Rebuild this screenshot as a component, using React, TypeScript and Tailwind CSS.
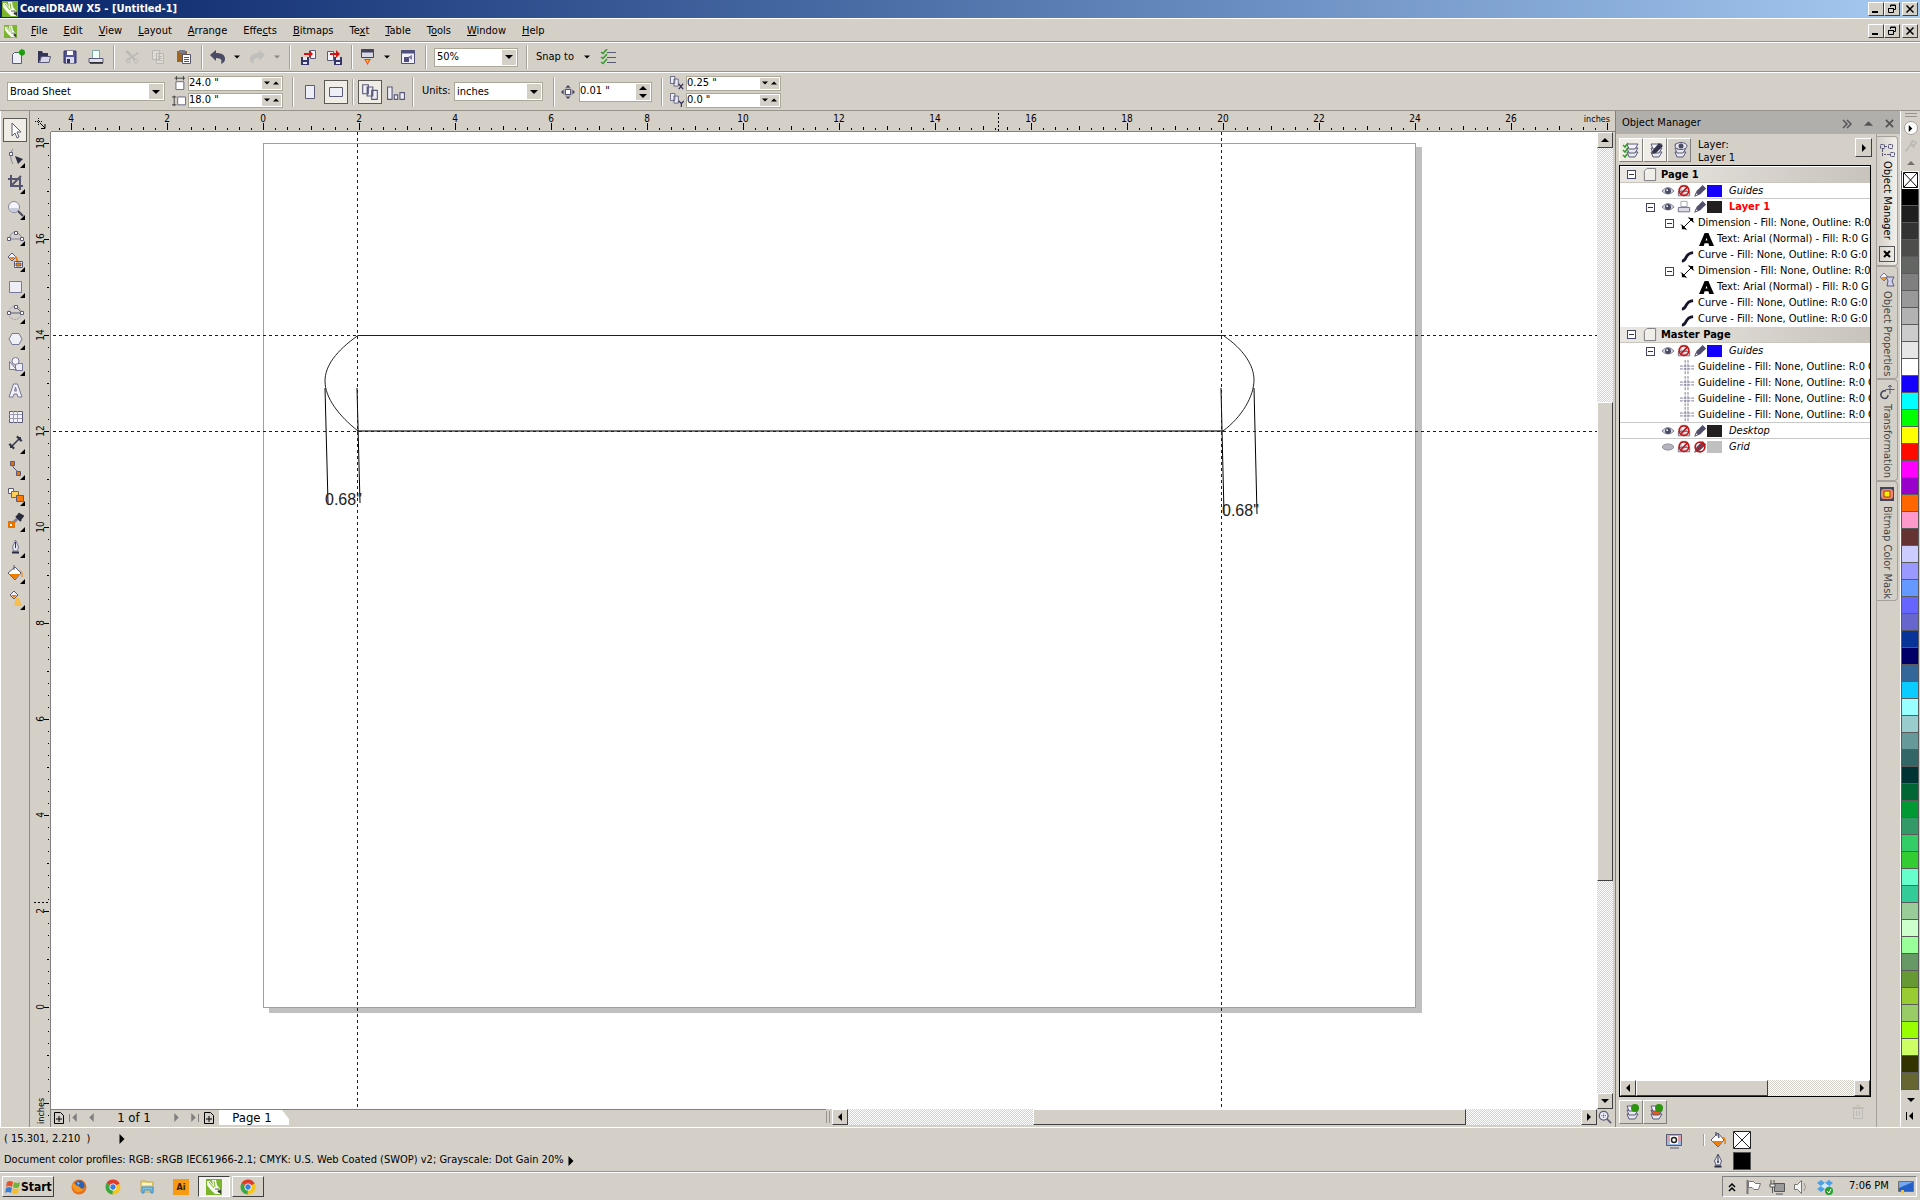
import React, { useState } from 'react';

const menus = [
  ['', 'F', 'ile'],
  ['', 'E', 'dit'],
  ['', 'V', 'iew'],
  ['', 'L', 'ayout'],
  ['', 'A', 'rrange'],
  ['Effe', 'c', 'ts'],
  ['', 'B', 'itmaps'],
  ['Te', 'x', 't'],
  ['', 'T', 'able'],
  ['T', 'o', 'ols'],
  ['', 'W', 'indow'],
  ['', 'H', 'elp'],
];

const palette = [
  '#000000', '#1f1f1f', '#333333', '#4d4d4b', '#646664', '#7f7f7f', '#999999', '#b2b2b2', '#cccccc', '#e6e6e6', '#ffffff',
  '#1400ff', '#00ffff', '#00ff00', '#ffff00', '#ff0a00', '#ff00ff', '#9900cc', '#ff6600', '#ff99cc', '#663333',
  '#ccccff', '#9999ff', '#6699ff', '#6666ff', '#6666cc', '#083399', '#000066', '#336699', '#0accff', '#99ffff',
  '#99cccc', '#669999', '#336666', '#003333', '#006633', '#009933', '#339966', '#33cc66', '#33cc33', '#66ffcc',
  '#33cc99', '#99cc99', '#ccffcc', '#99ff99', '#669966', '#669933', '#99cc33', '#99cc66', '#99ff00', '#ccff66',
  '#333300', '#666633',
];

type TreeRow = {
  kind: 'page' | 'layer' | 'dimension' | 'text' | 'curve' | 'guideline';
  label: string;
  open?: boolean;
  color?: string;
  active?: boolean;
  hidden?: boolean;
  locked?: boolean;
  line?: boolean;
};

const treeRows: TreeRow[] = [
  { kind: 'page', label: 'Page 1' },
  { kind: 'layer', label: 'Guides', color: '#1400ff', line: true },
  { kind: 'layer', label: 'Layer 1', color: '#231f20', open: true, active: true },
  { kind: 'dimension', label: 'Dimension - Fill: None, Outline: R:0 G' },
  { kind: 'text', label: 'Text: Arial (Normal) - Fill: R:0 G:' },
  { kind: 'curve', label: 'Curve - Fill: None, Outline: R:0 G:0' },
  { kind: 'dimension', label: 'Dimension - Fill: None, Outline: R:0 G' },
  { kind: 'text', label: 'Text: Arial (Normal) - Fill: R:0 G:' },
  { kind: 'curve', label: 'Curve - Fill: None, Outline: R:0 G:0' },
  { kind: 'curve', label: 'Curve - Fill: None, Outline: R:0 G:0' },
  { kind: 'page', label: 'Master Page' },
  { kind: 'layer', label: 'Guides', color: '#1400ff', open: true },
  { kind: 'guideline', label: 'Guideline - Fill: None, Outline: R:0 G' },
  { kind: 'guideline', label: 'Guideline - Fill: None, Outline: R:0 G' },
  { kind: 'guideline', label: 'Guideline - Fill: None, Outline: R:0 G' },
  { kind: 'guideline', label: 'Guideline - Fill: None, Outline: R:0 G', line: true },
  { kind: 'layer', label: 'Desktop', color: '#231f20', line: true },
  { kind: 'layer', label: 'Grid', color: '#c0c0c0', hidden: true, locked: true },
];

// Canvas scale: 48px per inch, origin measured from the canvas' top left
const INCH = 48;
const ORIGIN_X = 212;
const ORIGIN_Y = 875;

const raised = 'border border-t-white border-l-white border-r-[#404040] border-b-[#404040] bg-[#d4d0c8]';
const track = 'bg-[repeating-conic-gradient(#ffffff_0_25%,#d4d0c8_0_50%)] bg-[length:2px_2px]';
const INK = '#5a5a78';

function Icon({ children, size = 16, box = 16 }: { children: React.ReactNode; size?: number; box?: number }) {
  return (
    <svg width={size} height={size} viewBox={`0 0 ${box} ${box}`} fill="none" className="shrink-0" aria-hidden="true">
      {children}
    </svg>
  );
}

function Arrow({ dir, size = 8, color = '#000' }: { dir: 'up' | 'down' | 'left' | 'right'; size?: number; color?: string }) {
  const points = {
    up: '0,6 8,6 4,2',
    down: '0,2 8,2 4,6',
    left: '6,0 6,8 2,4',
    right: '2,0 2,8 6,4',
  };
  return (
    <svg width={size} height={size} viewBox="0 0 8 8" className="shrink-0" aria-hidden="true">
      <polygon points={points[dir]} fill={color} />
    </svg>
  );
}

function CorelLogo({ size = 16 }: { size?: number }) {
  return (
    <Icon size={size}>
      <rect width="16" height="16" fill="#7ab52c" />
      <path d="M1 2l3 0 3 4-1-5h4l1 5 3 4v5h-5L4 10 1 6z" fill="#f6f9f0" />
      <path d="M3 3l5 6M8 2l1 6" stroke="#7ab52c" />
      <path d="M9 10h4v4" stroke="#5d6b4a" />
      <path d="M11 12l4 3v-4z" fill="#333" />
    </Icon>
  );
}

function Bucket({ size = 18 }: { size?: number }) {
  return (
    <Icon size={size} box={18}>
      <path d="M2 9l7-7 6 7-6 7z" fill="#fff" stroke={INK} />
      <path d="M3 10h11l-5 5.500z" fill="#ee7d00" />
      <path d="M7 1v4M9 3l1 4" stroke={INK} strokeWidth="1.500" />
      <path d="M13 7c4-1 3 3 3 6" stroke="#ee7d00" strokeWidth="1.500" />
    </Icon>
  );
}

function Pen() {
  return (
    <Icon>
      <path d="M8 1l3.500 7-1.500 4H6L4.500 8z" fill="#e8e8f2" stroke={INK} />
      <path d="M8 2v7" stroke="#333348" />
      <circle cx="8" cy="9" r="1" fill="#333348" />
      <path d="M4.500 13.500h7" stroke="#2a2a40" strokeWidth="2" />
    </Icon>
  );
}

function Chrome() {
  return (
    <Icon>
      <circle cx="8" cy="8" r="7.500" fill="#f5c518" />
      <path d="M8 8L1.500 4.300A7.500 7.500 0 0 1 14.600 4.500z" fill="#e03b2c" />
      <path d="M8 8L1.500 4.300A7.500 7.500 0 0 0 7.500 15.500z" fill="#3aa648" />
      <circle cx="8" cy="8" r="3.500" fill="#fff" />
      <circle cx="8" cy="8" r="2.700" fill="#3b7ddd" />
    </Icon>
  );
}

/* ---------- Toolbar bits ---------- */

function Sep({ className = 'mx-1 h-6' }: { className?: string }) {
  return <div className={`w-0.5 shrink-0 border-l border-r border-l-[#a5a19a] border-r-white ${className}`} />;
}

function Tool({ label, width = 'w-[26px]', children }: { label: string; width?: string; children: React.ReactNode }) {
  return (
    <button type="button" aria-label={label} title={label} className={`flex h-6 shrink-0 items-center justify-center ${width}`}>
      {children}
    </button>
  );
}

function Combo({ label, options, className }: { label: string; options: string[]; className: string }) {
  return (
    <div className={`relative h-[19px] shrink-0 ${className}`}>
      <select aria-label={label} className="h-full w-full appearance-none border border-[#aca899] bg-white pr-4 pl-0.5 text-[11px] leading-4">
        {options.map((o) => (
          <option key={o}>{o}</option>
        ))}
      </select>
      <span className="pointer-events-none absolute top-0.5 right-0.5 bottom-0.5 flex w-3.5 items-center justify-center bg-[#d4d0c8]">
        <Arrow dir="down" />
      </span>
    </div>
  );
}

function SpinField({ label, value }: { label: string; value: string }) {
  return (
    <div className="flex h-[15px] w-[95px] items-center border border-[#aca899] bg-white">
      <input aria-label={label} defaultValue={value} className="w-[73px] min-w-0 bg-white text-[11px] leading-3 outline-none" />
      <div className="flex h-[11px] w-[19px] items-center justify-around bg-[#d4d0c8]">
        <button type="button" aria-label={`${label} down`}><Arrow dir="down" size={6} /></button>
        <button type="button" aria-label={`${label} up`}><Arrow dir="up" size={6} /></button>
      </div>
    </div>
  );
}

function WindowButtons() {
  return (
    <div className="flex pr-0.5">
      <button type="button" aria-label="Minimize" className={`flex h-3.5 w-4 items-center justify-center ${raised}`}>
        <Icon size={10} box={10}><path d="M1 8h6" stroke="#000" strokeWidth="2" /></Icon>
      </button>
      <button type="button" aria-label="Restore" className={`flex h-3.5 w-4 items-center justify-center ${raised}`}>
        <Icon size={10} box={10}><path d="M3.500 3V1h5v4.500H7M3 1.500h6M1.500 4.500h5v4h-5zM1 4.500h6" stroke="#000" /></Icon>
      </button>
      <button type="button" aria-label="Close" className={`ml-0.5 flex h-3.5 w-4 items-center justify-center ${raised}`}>
        <Icon size={10} box={10}><path d="M1.500 1.500l7 7M8.500 1.500l-7 7" stroke="#000" strokeWidth="1.500" /></Icon>
      </button>
    </div>
  );
}

function StandardBar() {
  return (
    <div className="flex h-[30px] items-center border-t border-b border-t-white border-b-[#98948b] pl-[5px]">
      <Tool label="New">
        <Icon>
          <path d="M2.500 5.500l2-2h7v11h-9z" fill="#eeeef6" stroke={INK} />
          <circle cx="12" cy="3.500" r="3" fill="#1f9a12" />
          <path d="M8 3.500h8M12 0v7" stroke="#1f9a12" strokeDasharray="1 1" />
        </Icon>
      </Tool>
      <Tool label="Open">
        <Icon>
          <path d="M2 2h4l1 2h5v4H5l-2 6H2z" fill="#35355a" />
          <path d="M5.500 7.500h9l-1.500 6H3.500z" fill="#d8d8e8" stroke={INK} />
        </Icon>
      </Tool>
      <Tool label="Save">
        <Icon>
          <path d="M2 2h12v12H2z" fill="#54549a" stroke="#30305c" />
          <rect x="5" y="2" width="6" height="4" fill="#fff" />
          <rect x="4" y="8" width="8" height="6" fill="#dcdcec" />
          <rect x="5" y="10" width="3" height="4" fill="#30305c" />
        </Icon>
      </Tool>
      <Tool label="Print">
        <Icon>
          <path d="M4.500 1.500h7v8h-7z" fill="#f0fff8" stroke="#80a8a0" />
          <path d="M1 9.500h14v4H1z" fill="#e0e0ea" stroke={INK} />
          <path d="M2 14h13" stroke="#222" strokeWidth="1.500" />
        </Icon>
      </Tool>
      <Sep />
      <Tool label="Cut">
        <Icon><path d="M3 2l8 9M3 11l11-7M2 2l4 4" stroke="#bcb9b4" strokeWidth="2" /><circle cx="4" cy="12" r="2" stroke="#bcb9b4" /><circle cx="12" cy="12" r="2" stroke="#bcb9b4" /></Icon>
      </Tool>
      <Tool label="Copy">
        <Icon><path d="M2.500 1.500h7v9h-7zM6.500 4.500h7v10h-7z" fill="#dedbd6" stroke="#b9b6b2" /><path d="M8 7.500h4M8 9.500h4M8 11.500h4" stroke="#b9b6b2" /></Icon>
      </Tool>
      <Tool label="Paste">
        <Icon>
          <path d="M1 2h10v11H1z" fill="#a0661e" />
          <path d="M3 1h6v3H3z" fill="#7a7a8c" />
          <path d="M6.500 5.500h8v9h-8z" fill="#fff" stroke="#55556e" />
          <path d="M8 8.500h5M8 10.500h5M8 12.500h5" stroke="#55556e" />
        </Icon>
      </Tool>
      <Sep />
      <Tool label="Undo" width="w-[22px]">
        <Icon><path d="M0 6l6-5v3c6 0 9 2 9 6 0 3-2 4-4 5 1-3 1-6-5-6v3z" fill="#4b4b66" /></Icon>
      </Tool>
      <Tool label="Undo history" width="w-4"><Arrow dir="down" size={6} /></Tool>
      <Tool label="Redo" width="w-6">
        <Icon><path d="M16 6l-6-5v3c-6 0-9 2-9 6 0 3 2 4 4 5-1-3-1-6 5-6v3z" fill="#bfbfbd" /></Icon>
      </Tool>
      <Tool label="Redo history" width="w-4"><Arrow dir="down" size={6} color="#8c8880" /></Tool>
      <Sep />
      <Tool label="Import">
        <Icon>
          <path d="M10.500 1.500h5v8h-5z" fill="#f3f3fa" stroke={INK} />
          <path d="M1 8h8v8H1z" fill="#35356a" /><path d="M3 8h4v3H3zM3 13h4v2H3z" fill="#e8e8f4" />
          <path d="M4 4h5V1l4 4-4 4V6H4z" fill="#d21414" />
        </Icon>
      </Tool>
      <Tool label="Export">
        <Icon>
          <path d="M1.500 2.500h6v9h-6z" fill="#f3f3fa" stroke={INK} />
          <path d="M8 8h8v8H8z" fill="#35356a" /><path d="M10 8h4v3h-4zM10 13h4v2h-4z" fill="#e8e8f4" />
          <path d="M4 4h6V1l4 4-4 4V6H4z" fill="#d21414" />
        </Icon>
      </Tool>
      <Sep />
      <Tool label="Application Launcher" width="w-[22px]">
        <Icon>
          <path d="M1.500.5h12v8h-12z" fill="#d8d8e4" stroke="#44445c" /><path d="M1 2h13" stroke="#44445c" strokeWidth="3" />
          <path d="M4 10h7l-2 3-1.500 3L6 13z" fill="#f2401c" /><path d="M6 11h3l-1.500 3z" fill="#ffc21a" />
        </Icon>
      </Tool>
      <Tool label="Launcher list" width="w-4"><Arrow dir="down" size={6} /></Tool>
      <Tool label="Welcome Screen">
        <Icon>
          <path d="M1.500 1.500h13v13h-13z" fill="#f0f0fa" stroke="#50507a" /><path d="M1 3h14" stroke="#50507a" strokeWidth="3" />
          <path d="M4 8h5v5H4z" fill="#50507a" /><path d="M12 6v5l-4-3z" fill="#7a7aaa" />
        </Icon>
      </Tool>
      <Sep />
      <Combo label="Zoom level" options={['50%', '100%', '200%']} className="ml-[3px] w-[84px]" />
      <Sep className="mr-1 ml-2 h-6" />
      <button type="button" className="ml-1 text-[11px]">Snap to</button>
      <Tool label="Snap options"><Arrow dir="down" size={6} /></Tool>
      <Tool label="Options" width="w-4">
        <Icon>
          <path d="M7 3.500h9M7 8.500h9M7 13.500h9" stroke={INK} />
          <path d="M1 3l2 1.500L7 0M1 8l2 1.500L7 5M1 13l2 1.500L7 10" stroke="#2f9d27" strokeWidth="1.500" />
        </Icon>
      </Tool>
    </div>
  );
}

function PropertyBar() {
  const [orientation, setOrientation] = useState('landscape');
  const on = 'border border-[#5c5a55] bg-[#f0ede6]';
  return (
    <div className="flex h-[39px] items-center border-t border-b border-t-white border-b-[#98948b] pl-[7px]">
      <Combo label="Paper type" options={['Broad Sheet', 'Letter', 'Tabloid']} className="w-[158px]" />
      <div className="ml-[7px] flex flex-col gap-0.5">
        <div className="flex items-center gap-0.5">
          <Icon size={14}><path d="M4.500 6.500h9v9h-9z" fill="#fff" stroke={INK} /><path d="M3 2.500h12M5 0v5M13 0v5" stroke="#333" /></Icon>
          <SpinField label="Page width" value={'24.0 "'} />
        </div>
        <div className="flex items-center gap-0.5">
          <Icon size={14}><path d="M6.500 4.500h9v9h-9z" fill="#fff" stroke={INK} /><path d="M2.500 3v12M0 4.500h5M0 13.500h5" stroke="#333" /></Icon>
          <SpinField label="Page height" value={'18.0 "'} />
        </div>
      </div>
      <Sep className="mr-1 ml-[9px] h-[30px]" />
      <button type="button" aria-label="Portrait" onClick={() => setOrientation('portrait')} className={`flex h-6 w-6 items-center justify-center ${orientation === 'portrait' ? on : ''}`}>
        <Icon><path d="M3.500 1.500h9v13h-9z" fill="#eeeef6" stroke={INK} /></Icon>
      </button>
      <button type="button" aria-label="Landscape" onClick={() => setOrientation('landscape')} className={`ml-0.5 flex h-6 w-6 items-center justify-center ${orientation === 'landscape' ? on : ''}`}>
        <Icon><path d="M1.500 3.500h13v9h-13z" fill="#eeeef6" stroke={INK} /></Icon>
      </button>
      <Sep className="mr-1 ml-1 h-[26px]" />
      <button type="button" aria-label="All pages" className={`flex h-6 w-6 items-center justify-center ${on}`}>
        <Icon size={18}><path d="M1.500 1.500h5v8h-5zM5.500 3.500h5v8h-5zM9.500 6.500h5v8h-5z" fill="#eeeef6" stroke={INK} /></Icon>
      </button>
      <button type="button" aria-label="Current page" className="ml-0.5 flex h-6 w-6 items-center justify-center">
        <Icon size={18}><path d="M.5 3.500h4v11h-4zM6.500 10.500h3v4h-3zM11.500 8.500h4v6h-4z" fill="#eeeef6" stroke={INK} /></Icon>
      </button>
      <Sep className="mr-2 ml-1 h-[30px]" />
      <label htmlFor="units" className="w-8 text-[11px]">Units:</label>
      <div className="relative h-[19px] w-[89px]">
        <select id="units" className="h-full w-full appearance-none border border-[#aca899] bg-white pl-0.5 text-[11px] leading-4">
          <option>inches</option>
          <option>millimeters</option>
        </select>
        <span className="pointer-events-none absolute top-0.5 right-0.5 bottom-0.5 flex w-3.5 items-center justify-center bg-[#d4d0c8]"><Arrow dir="down" /></span>
      </div>
      <Sep className="mr-1.5 ml-2.5 h-[30px]" />
      <Icon size={14}><path d="M8 0l3 3H5zM8 16l3-3H5zM0 8l3-3v6zM16 8l-3-3v6z" fill="#44445c" /><path d="M5 5h6v6H5z" fill="#fff" stroke={INK} strokeWidth="1.500" /></Icon>
      <div className="ml-1 flex h-5 w-[73px] items-center border border-[#aca899] bg-white pr-px">
        <input aria-label="Nudge distance" defaultValue={'0.01 "'} className="min-w-0 flex-1 bg-white text-[11px] outline-none" />
        <div className="flex h-4 w-3.5 flex-col items-center justify-around bg-[#d4d0c8]">
          <button type="button" aria-label="Nudge up" className="flex"><Arrow dir="up" /></button>
          <button type="button" aria-label="Nudge down" className="flex"><Arrow dir="down" /></button>
        </div>
      </div>
      <Sep className="mr-[7px] ml-[9px] h-[28px]" />
      <div className="flex flex-col gap-0.5">
        {[['X', '0.25 "'], ['Y', '0.0 "']].map(([axis, value]) => (
          <div key={axis} className="flex items-center gap-0.5">
            <Icon size={14}>
              <path d="M.5.5h5v8h-5zM4.500 3.500h5v8h-5z" fill="#eeeef6" stroke={INK} />
              <path d={axis === 'X' ? 'M10 9l5 6M15 9l-5 6' : 'M10 9l3 3 3-3M13 12v4'} stroke="#33335c" strokeWidth="1.500" />
            </Icon>
            <SpinField label={`Duplicate ${axis}`} value={value} />
          </div>
        ))}
      </div>
    </div>
  );
}

/* ---------- Toolbox ---------- */

const toolbox: { label: string; flyout?: boolean; art: React.ReactNode }[] = [
  { label: 'Pick', art: <path d="M5 1v13l3-3 2 5 2-1-2-5h4z" fill="#fff" stroke={INK} /> },
  { label: 'Shape', flyout: true, art: <><path d="M6 1c-3 4-3 10 0 15" stroke="#8585a0" /><path d="M2.500 4.500h3v3h-3z" fill="#fff" stroke={INK} /><path d="M8 8l8 3-5 5z" fill="#2b2b40" /></> },
  { label: 'Crop', flyout: true, art: <><path d="M1 5h12v11M4 1v11h12M5 11l9-9" stroke="#555570" strokeWidth="2" /></> },
  { label: 'Zoom', flyout: true, art: <><circle cx="7" cy="7" r="5.500" fill="#f4f4fa" stroke="#85859c" /><path d="M3 8h8c0 2-2 4-4 4s-4-2-4-4z" fill="#c7c9dc" /><path d="M11 11l5 5" stroke="#444458" strokeWidth="2" /></> },
  { label: 'Freehand', flyout: true, art: <><path d="M2 13c1-5 4-7 6-7s6 3 8 7H2" stroke="#8585a0" /><path d="M.5 11.500h3v3h-3zM7.500 5.500h3v3h-3zM13.500 11.500h3v3h-3z" fill="#fff" stroke={INK} /></> },
  { label: 'Smart Fill', flyout: true, art: <><path d="M1 5l4-4 4 4-4 4z" fill="#f3f3f8" stroke={INK} /><path d="M2 5h6L5 8z" fill="#ee7d00" /><path d="M8 5c3 0 1 5 4 6" stroke="#ee7d00" strokeWidth="2" /><path d="M7.500 9.500h8v6h-8z" fill="#fff" stroke={INK} /><path d="M9 11h5v3H9z" fill="#ee7d00" stroke={INK} /></> },
  { label: 'Rectangle', flyout: true, art: <path d="M2.500 3.500h12v11h-12z" fill="#eeeef4" stroke="#77779a" /> },
  { label: '3-Point Curve', flyout: true, art: <><circle cx="8" cy="9" r="6.500" stroke="#9a9aaa" strokeDasharray="2 1" /><path d="M2 9h13M9 3l5 5" stroke={INK} /><path d="M.5 7.500h3v3h-3zM7.500 1.500h3v3h-3zM13.500 7.500h3v3h-3z" fill="#fff" stroke={INK} /></> },
  { label: 'Polygon', flyout: true, art: <path d="M5 3.500h7l3 5.500-3 5.500H5L2 9z" fill="#f0f0f6" stroke="#77779a" /> },
  { label: 'Basic Shapes', flyout: true, art: <><path d="M2.500 5.500l7 8h-7zM8.500 7.500h7v7h-7z" fill="#eeeef4" stroke="#77779a" /><circle cx="8.500" cy="5" r="3.500" fill="#f6f6fa" stroke="#77779a" /></> },
  { label: 'Text', art: <path d="M2 15L6.500 2h4L15 15h-4l-1-3H7l-1 3zM7.500 9h2l-1-4z" fill="#f2f2f8" stroke="#77779a" /> },
  { label: 'Table', art: <><path d="M2.500 3.500h13v11h-13z" fill="#f4f4f8" stroke={INK} /><path d="M2 6.500h13M2 10.500h13M6.500 3v12M10.500 3v12" stroke="#9a9ab4" /></> },
  { label: 'Dimension', flyout: true, art: <><path d="M4 13L13 4M2 10l5 5M10 2l5 5" stroke="#333348" strokeWidth="1.500" /><path d="M3 14V9l5 5zM14 3v5L9 3z" fill="#333348" /></> },
  { label: 'Connector', flyout: true, art: <><path d="M6 4v3l6 6" stroke={INK} /><path d="M3.500 1.500h4v4h-4zM9.500 11.500h4v4h-4z" fill="#ee6d00" stroke={INK} /></> },
  { label: 'Blend', flyout: true, art: <><path d="M1.500 2.500h5v5h-5z" fill="#fff" stroke={INK} /><path d="M4.500 5.500h7v6h-7z" fill="#ffcf5e" stroke="#8a6a28" /><path d="M9.500 9.500h7v6h-7z" fill="#ff7a00" stroke={INK} /></> },
  { label: 'Color Eyedropper', flyout: true, art: <><path d="M6 11l6-6" stroke="#8585a0" strokeWidth="3" /><path d="M9 4l5 5M12 2l4 2-3 4-3-3z" stroke="#2b2b40" strokeWidth="2" fill="#2b2b40" /><path d="M1 9h7v7H1z" fill="#e87400" /><path d="M3 12h2v2H3z" fill="#fff" /></> },
  { label: 'Outline', flyout: true, art: <><path d="M8.500 2l3 7-1 4h-4l-1-4z" fill="#e8e8f2" stroke="#77779a" /><path d="M8.500 4v6" stroke="#333348" /><path d="M5 14.500h7" stroke="#2a2a40" strokeWidth="2" /></> },
  { label: 'Fill', flyout: true, art: <><path d="M1 9l7-6 6 6-6 7z" fill="#fff" stroke={INK} /><path d="M2 10h11l-5 5.500z" fill="#ee7d00" /><path d="M7 1v5" stroke={INK} /><path d="M12 7c4 0 3 3 3 6" stroke="#ee7d00" /></> },
  { label: 'Interactive Fill', flyout: true, art: <><path d="M3 5l4-4 4 4-4 4z" fill="#f3f3f8" stroke={INK} /><path d="M4 5h6L7 8z" fill="#ee7d00" /><path d="M9 8h3l3 8H7z" fill="#f4bd4c" /></> },
];

function Toolbox() {
  return (
    <aside className="flex w-[30px] shrink-0 flex-col border-r border-l border-r-[#8f8b83] border-l-white pt-[7px] pl-0.5">
      {toolbox.map((tool, i) => (
        <div key={tool.label} className="h-[26px]">
          <button
            type="button"
            aria-label={tool.label}
            className={`relative flex h-6 w-6 items-center justify-center ${i === 0 ? 'border border-[#5c5a55] bg-[#f0ede6]' : ''}`}
          >
            <Icon size={17} box={17}>{tool.art}</Icon>
            {tool.flyout && (
              <svg width="5" height="5" className="absolute right-0.5 bottom-0" aria-hidden="true">
                <polygon points="5,0 5,5 0,5" />
              </svg>
            )}
          </button>
        </div>
      ))}
    </aside>
  );
}

/* ---------- Rulers and canvas ---------- */

function tickLength(quarter: number) {
  if (quarter % 8 === 0) return 7;
  if (quarter % 4 === 0) return 4;
  if (quarter % 2 === 0) return 3;
  return 2;
}

function HorizontalRuler() {
  const quarters = Array.from({ length: 134 }, (_, i) => i - 17);
  return (
    <svg className="h-5 min-w-0 flex-1" aria-label="Horizontal ruler">
      {quarters.map((q) => {
        const x = ORIGIN_X + q * (INCH / 4);
        const inch = q / 4;
        return (
          <g key={q}>
            <rect x={x} y={19 - tickLength(q)} width="1" height={tickLength(q)} />
            {q % 8 === 0 && q < 112 && (
              <text x={x} y="11" textAnchor="middle" fontSize="10">{Math.abs(inch)}</text>
            )}
          </g>
        );
      })}
      <path d="M947.500 2v18" stroke="#000" strokeDasharray="2 2" />
      <text x="1559" y="11" textAnchor="end" fontSize="9">inches</text>
    </svg>
  );
}

function VerticalRuler() {
  const quarters = Array.from({ length: 83 }, (_, i) => 72 - i);
  return (
    <svg className="h-full w-5" aria-label="Vertical ruler">
      {quarters.map((q) => {
        const y = ORIGIN_Y - q * (INCH / 4);
        const len = Math.max(1, tickLength(q) - 2);
        return (
          <g key={q}>
            <rect x={19 - len} y={y} width={len} height="1" />
            {q % 8 === 0 && q >= 0 && (
              <text transform={`translate(14 ${y}) rotate(-90)`} textAnchor="middle" fontSize="10">{q / 4}</text>
            )}
          </g>
        );
      })}
      <path d="M4 770.500h16" stroke="#000" strokeDasharray="2 2" />
      <text transform="translate(14 992) rotate(-90)" fontSize="9">inches</text>
    </svg>
  );
}

function Canvas() {
  return (
    <svg className="min-h-0 w-full flex-1 bg-white" aria-label="Drawing page">
      <rect x={ORIGIN_X + 6} y="15" width="1153" height="866" fill="#c0c0c0" />
      <rect x={ORIGIN_X + 0.5} y="11.500" width="1152" height="864" fill="#fff" stroke="#a0a0a0" />
      <g fill="none" stroke="#222">
        <path d="M307 203.500H1173" />
        <path d="M306 299H1173" stroke="#777" strokeWidth="2" />
        <path d="M307 203.500C285 219 274 234 274 249C274 266 288 284 307 299" />
        <path d="M1173 204C1192 217 1203 233 1203 248C1203 264 1191 285 1172 299" />
        <path d="M274 256L277 371M306 256L309 371M1170 256L1173 381M1203 256L1206 382" stroke="#000" />
      </g>
      <g fontFamily="'Liberation Sans', Arial, sans-serif" fontSize="16" fill="#222">
        <text x="274" y="373">0.68"</text>
        <text x="1171" y="384">0.68"</text>
      </g>
      <g stroke="#0a00e0" strokeDasharray="3 3">
        <path d="M2 203.500H2600M2 299.500H2600" />
        <path d="M306.500 0V2000M1170.500 0V2000" />
      </g>
    </svg>
  );
}

function ScrollButton({ dir, className = 'h-4 w-4' }: { dir: 'up' | 'down' | 'left' | 'right'; className?: string }) {
  return (
    <button type="button" aria-label={`Scroll ${dir}`} className={`flex shrink-0 items-center justify-center ${raised} ${className}`}>
      <Arrow dir={dir} />
    </button>
  );
}

function PageNav() {
  const plus = (
    <Icon size={12} box={12}><path d="M1.500.5h6l3 3v8h-9zM6 4v6M3 7h6" stroke="#000" /></Icon>
  );
  return (
    <div className="mb-0.5 flex h-4">
      <div className="flex min-w-0 flex-1 items-center border-t border-[#808080]">
        <div className="flex items-center pl-0.5">
          <button type="button" aria-label="Add page before">{plus}</button>
          <button type="button" aria-label="First page" className="ml-1 flex items-center"><span className="h-2 w-px bg-[#808080]" /><Arrow dir="left" color="#808080" size={9} /></button>
          <button type="button" aria-label="Previous page" className="ml-2"><Arrow dir="left" color="#808080" size={9} /></button>
        </div>
        <span className="w-[76px] text-center text-[13px] leading-4">1 of 1</span>
        <div className="flex items-center">
          <button type="button" aria-label="Next page"><Arrow dir="right" color="#808080" size={9} /></button>
          <button type="button" aria-label="Last page" className="ml-2 flex items-center"><Arrow dir="right" color="#808080" size={9} /><span className="h-2 w-px bg-[#808080]" /></button>
          <button type="button" aria-label="Add page after" className="ml-1">{plus}</button>
        </div>
        <button type="button" className="ml-1 h-[15px] w-[70px] bg-white pr-1 text-center text-[13px] leading-[15px] [clip-path:polygon(0_0,90%_0,100%_60%,100%_100%,0_100%)]">Page 1</button>
      </div>
      <div className="flex w-1 items-center"><span className="h-3 w-1 border-r border-l border-[#98948b]" /></div>
      <div className={`ml-0.5 flex w-[49%] ${track}`}>
        <ScrollButton dir="left" />
        <div className="flex-[185]" />
        <div className={`flex-[431] ${raised}`} />
        <div className="flex-[115]" />
        <ScrollButton dir="right" />
      </div>
      <button type="button" aria-label="Navigator" className="flex h-4 w-4 items-center justify-center">
        <Icon size={14}><circle cx="6.500" cy="6.500" r="5" fill="#eeeef8" stroke={INK} strokeWidth="1.500" /><path d="M10 10l5 5" stroke={INK} strokeWidth="2" /><path d="M4 6.500h5M6.500 4v5" stroke="#333" strokeDasharray="1 1" /></Icon>
      </button>
    </div>
  );
}

function Workspace() {
  return (
    <main className="flex min-w-0 flex-1 flex-col">
      <div className="flex h-[21px]">
        <div className="flex w-[21px] shrink-0 items-center justify-center pt-1">
          <Icon size={12} box={12}><path d="M0 3.500h8M3.500 0v8" stroke="#000" strokeDasharray="1 1" /><path d="M5 5l5 5M10 6v4.500H6" stroke="#000" /></Icon>
        </div>
        <div className="flex min-w-0 flex-1 border-b border-[#808080]"><HorizontalRuler /></div>
      </div>
      <div className="flex min-h-0 flex-1">
        <div className="w-[21px] shrink-0 border-r border-[#808080]"><VerticalRuler /></div>
        <div className="flex min-w-0 flex-1 flex-col pr-0.5">
          <div className="flex min-h-0 flex-1">
            <div className="flex min-w-0 flex-1 flex-col"><Canvas /></div>
            <div className={`flex w-4 shrink-0 flex-col ${track}`}>
              <ScrollButton dir="up" />
              <div className="flex-[255]" />
              <div className={`flex-[478] ${raised}`} />
              <div className="flex-[212]" />
              <ScrollButton dir="down" />
            </div>
          </div>
          <PageNav />
        </div>
      </div>
    </main>
  );
}

/* ---------- Object manager ---------- */

function Expander() {
  return (
    <button type="button" aria-label="Collapse" className="flex h-[9px] w-[9px] shrink-0 items-center justify-center border border-[#44446a] bg-white">
      <span className="h-px w-[5px] bg-[#33334c]" />
    </button>
  );
}

function Eye({ hidden }: { hidden?: boolean }) {
  return hidden ? (
    <Icon size={14}><ellipse cx="8" cy="8" rx="6.500" ry="3.500" fill="#b4b4c0" stroke="#8c8c98" /></Icon>
  ) : (
    <Icon size={14}><path d="M1 8q7-8 14 0q-7 7-14 0z" fill="#d8d8e4" stroke="#77778c" /><circle cx="8" cy="8" r="3.500" fill="#4c4c66" /><circle cx="7" cy="7" r="1" fill="#fff" /></Icon>
  );
}

function Printer({ blocked }: { blocked?: boolean }) {
  return (
    <Icon size={14}>
      <path d="M4.500 1.500h7v6h-7z" fill="#fff" stroke="#9a9ab0" />
      <path d="M1.500 8.500h13v5h-13z" fill="#dcdce6" stroke="#66667c" />
      {blocked && <><circle cx="8" cy="7.500" r="5.500" stroke="#c01818" strokeWidth="2" /><path d="M4 12l8-9" stroke="#c01818" strokeWidth="2" /></>}
    </Icon>
  );
}

function Pencil({ blocked }: { blocked?: boolean }) {
  return (
    <Icon size={14}>
      <path d="M2 14l2-6 7-7 4 4-7 7z" fill="#50506c" /><path d="M2 14l1.500-4L6 12z" fill="#fff" stroke="#50506c" />
      {blocked && <><circle cx="8" cy="8" r="5.500" stroke="#c01818" strokeWidth="2" /><path d="M4 12l8-8" stroke="#c01818" strokeWidth="2" /></>}
    </Icon>
  );
}

function TreeItem({ row }: { row: TreeRow }) {
  if (row.kind === 'page') {
    return (
      <li className="flex h-4 items-center border-b border-[#c9c5bd] bg-linear-to-r from-[#ebe8e3] to-[#c8c3bb] pl-[7px] text-[11px] font-bold">
        <Expander />
        <span className="ml-1.5 flex w-[19px] shrink-0"><Icon size={15}><path d="M5.500 1.500h9v13h-12v-10z" fill="#f0eee9" stroke="#77747c" /><path d="M3 5l3-3v3z" fill="#fff" /></Icon></span>
        {row.label}
      </li>
    );
  }
  if (row.kind === 'layer') {
    return (
      <li className={`flex h-4 items-center ${row.line ? 'border-b border-[#c8c8c8]' : ''}`}>
        <span className="ml-[26px] flex w-[15px] shrink-0">{row.open && <Expander />}</span>
        <Eye hidden={row.hidden} />
        <span className="ml-0.5 flex"><Printer blocked={!row.active} /></span>
        <span className="ml-0.5 flex"><Pencil blocked={row.locked} /></span>
        <span className="h-[12px] w-[15px] shrink-0" style={{ backgroundColor: row.color }} />
        <span className={`ml-[7px] ${row.active ? 'font-bold text-[#ff0000]' : 'italic'}`}>{row.label}</span>
      </li>
    );
  }
  const icons = {
    dimension: <Icon size={15}><path d="M4 12l8-8M1 9l6 6M9 1l6 6" stroke="#000" /><path d="M2 14v-5l5 5zM14 2v5L9 2z" fill="#000" /></Icon>,
    text: <Icon size={15}><path d="M0 15L6 1h4l6 14h-5l-1-3H6l-1 3zM7 9h2L8 6z" fill="#000" /></Icon>,
    curve: <Icon size={15}><path d="M2 14c6 0 2-8 12-9" stroke="#15152c" strokeWidth="3" /></Icon>,
    guideline: <Icon size={15}><path d="M5.500 0v16M8.500 0v16M0 6.500h16M0 9.500h16" stroke="#77779a" strokeDasharray="3 1" /></Icon>,
  };
  return (
    <li className={`flex h-4 items-center whitespace-nowrap ${row.kind === 'text' ? 'pl-[79px]' : 'pl-[45px]'} ${row.line ? 'border-b border-[#c8c8c8]' : ''}`}>
      {row.kind !== 'text' && <span className="flex w-[15px] shrink-0">{row.kind === 'dimension' && <Expander />}</span>}
      <span className="mr-[3px] flex">{icons[row.kind]}</span>
      {row.label}
    </li>
  );
}

function Layers({ mark }: { mark: 'check' | 'pencil' | 'eye' | 'new' | 'master' }) {
  return (
    <Icon size={18} box={18}>
      <path d="M5 11h11l-3 5H7z" fill="#e8e8f0" stroke={INK} />
      <path d="M5 7h11l-3 5H7z" fill={mark === 'master' ? '#e85a1c' : '#e8e8f0'} stroke={INK} />
      <path d="M5 3h11l-3 5H7z" fill="#f4f4fa" stroke={INK} />
      {mark === 'check' && <path d="M1 4l2 2 3-4M1 9l2 2 3-4M1 14l2 2 3-4" stroke="#2f9d27" strokeWidth="1.500" />}
      {mark === 'pencil' && <path d="M6 13l1-4 6-7 4 3-7 7z" fill="#33334a" />}
      {mark === 'eye' && <><ellipse cx="11" cy="5" rx="6" ry="3.500" fill="#e8e8f0" stroke={INK} /><circle cx="11" cy="5" r="2.500" fill="#4c4c66" /></>}
      {(mark === 'new' || mark === 'master') && <circle cx="13" cy="5" r="4" fill="#2c9410" />}
    </Icon>
  );
}

const dockerTabs = [
  { label: 'Object Manager', height: 'h-[130px]', art: <path d="M1.500 3.500h4v4h-4zM9.500 3.500h4v4h-4zM11.500 11.500h4v4h-4zM5 5.500h5M3.500 8v7M11 13.500H5" stroke={INK} strokeDasharray="3 1" /> },
  { label: 'Object Properties', height: 'h-[113px]', art: <><path d="M1 6l4-4 4 4-4 4z" fill="#f3f3f8" stroke="#77779a" /><path d="M2 6h6L5 9.500z" fill="#ee8d10" /><path d="M7 6h8l-2 4 2 5H8l1-5z" fill="#d0d0ec" stroke={INK} /></> },
  { label: 'Transformation', height: 'h-[102px]', art: <><path d="M11 1v9M6.500 5.500h9M11 1l-2 2M11 1l2 2" stroke={INK} /><path d="M7 7c-5-1-7 5-3 7 3 1 5 0 5-3" stroke="#44445c" strokeWidth="1.500" /></> },
  { label: 'Bitmap Color Mask', height: 'h-[120px]', art: <><path d="M1 1h14v14H1z" fill="#44445c" /><rect x="2" y="3" width="12" height="10" rx="3" fill="#f28a6a" /><path d="M5 5h6v6H5z" fill="#ffee00" stroke="#9a3a1c" /></> },
];

function ObjectManager() {
  const [tab, setTab] = useState('Object Manager');
  return (
    <section className="flex w-[285px] shrink-0 flex-col border-l border-[#808080]">
      <header className="flex h-[23px] items-center gap-3 bg-[#b0afab] pt-0.5 pr-1.5 pl-1.5">
        <h2 className="flex-1 text-[11px]">Object Manager</h2>
        <button type="button" aria-label="Collapse docker"><Icon size={10} box={10}><path d="M1 1l4 4-4 4M5 1l4 4-4 4" stroke="#555" strokeWidth="1.500" /></Icon></button>
        <button type="button" aria-label="Roll up"><Arrow dir="up" size={9} color="#555" /></button>
        <button type="button" aria-label="Close docker"><Icon size={9} box={10}><path d="M1 1l8 8M9 1l-8 8" stroke="#555" strokeWidth="2" /></Icon></button>
      </header>
      <div className="flex min-h-0 flex-1">
        <div className="flex min-w-0 flex-1 flex-col pl-[3px]">
          <div className="flex h-[31px] items-start pt-1">
            {(['check', 'pencil', 'eye'] as const).map((mark) => (
              <button key={mark} type="button" aria-label={`Layer view ${mark}`} className={`flex h-6 w-6 items-center justify-center border border-t-white border-l-white border-r-[#808080] border-b-[#808080] ${mark === 'eye' ? 'bg-[#d4d0c8]' : 'bg-[#f0ede6]'}`}>
                <Layers mark={mark} />
              </button>
            ))}
            <div className="ml-[7px] flex-1 text-[11px] leading-[13px]">
              <p>Layer:</p>
              <p>Layer 1</p>
            </div>
            <button type="button" aria-label="Object manager options" className={`mr-1 flex h-[19px] w-[17px] items-center justify-center ${raised}`}><Arrow dir="right" /></button>
          </div>
          <div className="mr-[5px] flex min-h-0 flex-1 flex-col border border-black bg-white">
            <ul className="min-h-0 flex-1 overflow-hidden pt-px text-[11px] leading-4">
              {treeRows.map((row, i) => (
                <TreeItem key={i} row={row} />
              ))}
            </ul>
            <div className={`flex h-4 ${track}`}>
              <ScrollButton dir="left" />
              <div className={`w-[132px] ${raised}`} />
              <div className="flex-1" />
              <ScrollButton dir="right" />
            </div>
          </div>
          <div className="flex h-[30px] items-center">
            <button type="button" aria-label="New layer" className="flex h-6 w-6 items-center justify-center border border-t-white border-l-white border-r-[#808080] border-b-[#808080]"><Layers mark="new" /></button>
            <button type="button" aria-label="New master layer" className="flex h-6 w-6 items-center justify-center border border-t-white border-l-white border-r-[#808080] border-b-[#808080]"><Layers mark="master" /></button>
            <span className="flex-1" />
            <button type="button" aria-label="Delete" className="mr-2.5"><Icon><path d="M3.500 4.500h9v10h-9zM2 3.500h12M6 1.500h4M6.500 7v5M9.500 7v5" stroke="#bdbab6" /></Icon></button>
          </div>
        </div>
        <nav className="w-[24px] shrink-0 border-l border-[#a5a19a] pt-0.5">
          {dockerTabs.map((t) => (
            <button
              key={t.label}
              type="button"
              onClick={() => setTab(t.label)}
              className={`flex w-[21px] flex-col items-center gap-1 rounded-r border-t border-r border-b border-[#a5a19a] pt-1 ${t.height} ${tab === t.label ? 'bg-linear-to-r from-[#d4d0c8] to-[#f2f0ec] text-black' : 'text-[#444]'}`}
            >
              <Icon>{t.art}</Icon>
              <span className="text-[11px] leading-4 whitespace-nowrap [writing-mode:vertical-rl]">{t.label}</span>
              {tab === t.label && (
                <span className="mt-0.5 flex h-4 w-4 items-center justify-center border border-[#555]"><Icon size={8} box={8}><path d="M1 1l6 6M7 1L1 7" stroke="#000" strokeWidth="2" /></Icon></span>
              )}
            </button>
          ))}
        </nav>
      </div>
    </section>
  );
}

function Palette() {
  return (
    <aside className="flex w-5 shrink-0 flex-col border-l border-white">
      <div className="flex h-[60px] flex-col items-center pt-0.5">
        <span className="h-1 w-3 border-t border-b border-[#98948b]" />
        <button type="button" aria-label="Palette menu" className="mt-1 flex h-3.5 w-3.5 items-center justify-center rounded-full border border-[#a5a19a] bg-white"><Arrow dir="right" size={7} /></button>
        <span className="mt-1 flex"><Icon size={14}><path d="M2 14l6-8M7 5l5 5M10 2l4 2-3 4-3-3z" stroke="#bdbab6" strokeWidth="2" /></Icon></span>
        <button type="button" aria-label="Palette up" className="mt-1.5"><Arrow dir="up" color="#77736c" /></button>
      </div>
      <div className="mr-px bg-[#5a5a5a] pl-px">
        <button type="button" aria-label="No color" className="block h-[18px] w-full border border-white bg-white">
          <svg className="h-4 w-full" viewBox="0 0 16 16" preserveAspectRatio="none"><path d="M.5.5h15v15H.5zM1 1l14 14M15 1L1 15" fill="#fff" stroke="#000" /></svg>
        </button>
        {palette.map((color) => (
          <div key={color} className="h-[17px] pr-px pb-px">
            <button type="button" aria-label={color} className="block h-4 w-full" style={{ backgroundColor: color }} />
          </div>
        ))}
      </div>
      <div className="flex flex-col items-center gap-2 pt-1.5">
        <button type="button" aria-label="Palette down" className="flex"><Arrow dir="down" /></button>
        <button type="button" aria-label="Expand palette" className="flex items-center"><span className="h-2 w-px bg-black" /><Arrow dir="left" /></button>
      </div>
    </aside>
  );
}

/* ---------- Bottom ---------- */

function StatusBar() {
  return (
    <footer className="flex h-11 items-stretch border-t border-white">
      <div className="flex flex-1 flex-col pl-1 text-[11px]">
        <div className="flex h-[22px] items-center">
          <span className="w-[113px]">( 15.301, 2.210&nbsp; )</span>
          <Arrow dir="right" size={10} />
        </div>
        <div className="flex h-[21px] items-center gap-0.5">
          <span>Document color profiles: RGB: sRGB IEC61966-2.1; CMYK: U.S. Web Coated (SWOP) v2; Grayscale: Dot Gain 20%</span>
          <Arrow dir="right" size={10} />
        </div>
      </div>
      <div className="flex w-[254px] gap-5 pt-0.5">
        <div className="flex h-[21px] w-[17px] items-center">
          <Icon><path d="M.5 1.500h15v11H.5z" fill="#d8a0a8" stroke={INK} /><path d="M1 8h14v4H1z" fill="#9ab8e8" /><path d="M4 3h8v8H4z" fill="#fff" /><circle cx="8" cy="7" r="2.500" stroke="#222" strokeWidth="1.500" /><path d="M4 15h9" stroke={INK} /></Icon>
        </div>
        <div className="flex flex-col">
          <div className="flex h-[21px] items-center gap-1"><Sep className="h-3" /><Bucket size={18} /><span className="ml-0.5 flex"><svg width="18" height="18"><path d="M.5.5h17v17H.5zM1 1l16 16M17 1L1 17" fill="#fff" stroke="#222" /></svg></span></div>
          <div className="flex h-[21px] items-center gap-[7px] pl-[7px]"><Pen /><span className="h-[18px] w-[18px] border border-[#555] bg-black" /></div>
        </div>
      </div>
    </footer>
  );
}

function Taskbar() {
  return (
    <div className="flex h-[29px] items-center border-t border-[#98948b] pt-px pr-[3px] pl-0.5 shadow-[inset_0_1px_0_#fff]">
      <button type="button" className={`flex h-[21px] w-[52px] items-center pl-0.5 text-[12px] font-bold ${raised}`}>
        <Icon><path d="M2 3q3-2 6 0L7 8Q4 6 1 8z" fill="#e8502a" /><path d="M9 3q3 2 6 0l-1 5q-3 2-6 0z" fill="#6fb33a" /><path d="M1 9q3-2 6 0l-1 5q-3-2-6 0z" fill="#3b7fd4" /><path d="M8 9q3 2 6 0l-1 5q-3 2-6 0z" fill="#f6bd24" /></Icon>
        Start
      </button>
      <div className="ml-2 flex">
        <button type="button" aria-label="Firefox" className="flex w-[34px] justify-center">
          <Icon><circle cx="8" cy="8" r="7.500" fill="#e8701a" /><circle cx="8.500" cy="6.500" r="5" fill="#2a62b4" /><path d="M1 5c2-2 3 1 6 2s2 4 6 2c-1 5-11 7-12-4z" fill="#f6961e" /><path d="M6 3l3 1-2 2z" fill="#a8c8f0" /></Icon>
        </button>
        <button type="button" aria-label="Chrome" className="flex w-[34px] justify-center"><Chrome /></button>
        <button type="button" aria-label="Explorer" className="flex w-[34px] justify-center">
          <Icon><path d="M2 2h5l1 1h6v10H2z" fill="#f2d77a" stroke="#c9a64a" /><path d="M3 5h10" stroke="#fff6cf" strokeWidth="2" /><path d="M3 14V8h11v6h-2v-3H5v3z" fill="#7cc4ee" stroke="#3a8cc8" /></Icon>
        </button>
        <button type="button" className="flex w-[34px] justify-center"><span className="h-4 w-4 bg-[#f79a14] text-center text-[9px] leading-4 font-bold text-[#3a1c00]">Ai</span></button>
      </div>
      <button type="button" aria-label="CorelDRAW" className="flex h-[21px] w-8 items-center justify-center border border-t-[#404040] border-r-white border-b-white border-l-[#404040] bg-[#f4f2ee]"><CorelLogo /></button>
      <button type="button" aria-label="Chrome window" className={`ml-0.5 flex h-[21px] w-8 items-center justify-center ${raised}`}><Chrome /></button>
      <div className="flex-1" />
      <div className="flex h-[21px] w-[195px] items-center border border-t-[#808080] border-r-white border-b-white border-l-[#808080] pl-1">
        <button type="button" aria-label="Show hidden icons" className="flex w-2.5"><Icon size={10} box={10}><path d="M2 5l3-3 3 3M2 9l3-3 3 3" stroke="#000" strokeWidth="1.500" /></Icon></button>
        <span className="ml-2 flex gap-2">
          <Icon><path d="M2.500 1v14" stroke="#777" strokeWidth="2" /><path d="M3.500 2.500h5l2 2h5l-2 6H9l-2-2H3.500z" fill="#fff" stroke="#777" /></Icon>
          <Icon><path d="M5.500 4.500h10v8h-10z" fill="#999" stroke="#555" /><path d="M7 15h7M2 1v4M5 1v4M1 5h5v3H1zM3.500 8v6" stroke="#555" fill="#eee" /></Icon>
          <Icon><path d="M1.500 5.500h3l4-4v13l-4-4h-3z" fill="#f4f4f4" stroke="#777" /><path d="M11 4q3 4 0 8M13 2" stroke="#999" /></Icon>
          <Icon><path d="M4 1l4 3-4 3-4-3zM12 1l4 3-4 3-4-3zM4 7l4 3-4 3-4-3zM12 7l4 3-4 3-4-3z" fill="#4aa3e8" /><path d="M8 4l4 3-4 3-4-3z" fill="#cfe8fb" /><circle cx="12" cy="12" r="4" fill="#28a22c" /><path d="M10 12l2 2 2-4" stroke="#fff" /></Icon>
        </span>
        <span className="ml-4 flex-1 text-[11px] whitespace-nowrap">7:06 PM</span>
        <button type="button" aria-label="Show desktop" className="mr-0.5 flex"><Icon><path d="M.5 2.500h15v10H.5z" fill="#2460c8" stroke="#707070" /><path d="M1 3h14L1 9z" fill="#74a8f0" /><path d="M3 11h3v3H3z" fill="#f2c42a" /></Icon></button>
      </div>
    </div>
  );
}

export default function App() {
  return (
    <div className="flex h-screen flex-col overflow-hidden bg-[#d4d0c8] font-['DejaVu_Sans_Condensed',Tahoma,sans-serif] text-[11px] text-black">
      <div className="flex h-[18px] shrink-0 items-center bg-linear-to-r from-[#0a246a] to-[#a6caf0] pl-0.5">
        <CorelLogo />
        <h1 className="ml-0.5 flex-1 text-[11px] leading-4 font-bold text-white">CorelDRAW X5 - [Untitled-1]</h1>
        <WindowButtons />
      </div>
      <div className="flex h-6 shrink-0 items-center border-b border-[#98948b] pt-[3px] pl-1 shadow-[inset_0_1px_0_#fff]">
        <CorelLogo size={13} />
        <nav className="ml-3.5 flex flex-1 gap-4">
          {menus.map(([pre, key, post]) => (
            <button key={pre + key + post} type="button" className="text-[11px] leading-4">
              {pre}<span className="underline">{key}</span>{post}
            </button>
          ))}
        </nav>
        <WindowButtons />
      </div>
      <div className="shrink-0">
        <StandardBar />
        <PropertyBar />
      </div>
      <div className="flex min-h-0 flex-1">
        <Toolbox />
        <Workspace />
        <ObjectManager />
        <Palette />
      </div>
      <div className="shrink-0">
        <StatusBar />
        <Taskbar />
      </div>
    </div>
  );
}
